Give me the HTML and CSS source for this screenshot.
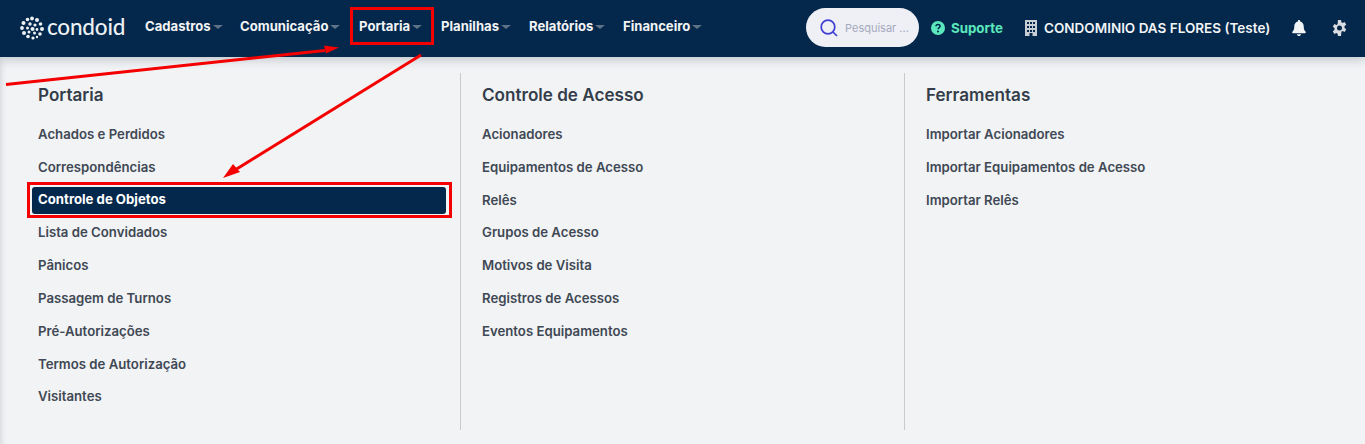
FILE: index.html
```html
<!DOCTYPE html>
<html lang="pt">
<head>
<meta charset="utf-8">
<title>Condoid</title>
<link rel="stylesheet" href="styles.css">
</head>
<body>
<header class="nav">
  <div class="logo">
    <svg class="logo-mark" width="24" height="24" viewBox="0 0 24 24" fill="#eef1f4">
      <circle cx="12" cy="2.500" r="1.900"/><circle cx="7.500" cy="3.500" r="1.800"/><circle cx="17" cy="4" r="2"/><circle cx="3.500" cy="7" r="2"/><circle cx="20.500" cy="8" r="1.800"/><circle cx="2" cy="12" r="1.900"/><circle cx="22" cy="13" r="2"/><circle cx="4" cy="17" r="2"/><circle cx="20" cy="18" r="1.800"/><circle cx="8" cy="20.500" r="1.800"/><circle cx="13" cy="22" r="1.600"/><circle cx="17" cy="21" r="1.200"/><circle cx="10" cy="8" r="1.700"/><circle cx="15" cy="9" r="1.600"/><circle cx="7.500" cy="12" r="1.500"/><circle cx="12.500" cy="13" r="2"/><circle cx="17" cy="13.500" r="1.400"/><circle cx="9" cy="16" r="1.500"/><circle cx="14.500" cy="17" r="1.500"/>
    </svg>
    <span class="logo-text">condoid</span>
  </div>
  <nav class="menu">
    <a class="menu-item cadastros">Cadastros<i class="caret"></i></a>
    <a class="menu-item comunicacao">Comunicação<i class="caret"></i></a>
    <a class="menu-item portaria">Portaria<i class="caret"></i></a>
    <a class="menu-item planilhas">Planilhas<i class="caret"></i></a>
    <a class="menu-item relatorios">Relatórios<i class="caret"></i></a>
    <a class="menu-item">Financeiro<i class="caret"></i></a>
  </nav>
  <div class="right">
    <div class="search">
      <svg width="20" height="20" viewBox="0 0 20 20" fill="none" stroke="#3f3fd1" stroke-width="1.700"><circle cx="9" cy="9" r="6.800"/><path d="M14 14l4 4"/></svg>
      <span>Pesquisar ...</span>
    </div>
    <a class="support">
      <svg width="14" height="14" viewBox="0 0 14 14"><circle cx="7" cy="7" r="7" fill="#5ce8bd"/><path d="M4.900 5.300C5 4.100 5.900 3.400 7 3.400c1.200 0 2.100.8 2.100 1.800 0 1.500-2 1.500-2 3" fill="none" stroke="#03284c" stroke-width="1.500"/><circle cx="7" cy="10.400" r="1" fill="#03284c"/></svg>
      <span>Suporte</span>
    </a>
    <div class="condo">
      <svg width="12" height="16" viewBox="0 0 12 16"><path fill-rule="evenodd" fill="#c9ced4" d="M0 0h12v16H7.500v-3h-3v3H0zM2 2v2h2V2zm3 0v2h2V2zm3 0v2h2V2zM2 6v2h2V6zm3 0v2h2V6zm3 0v2h2V6zM2 10v2h2v-2zm3 0v2h2v-2zm3 0v2h2v-2z"/></svg>
      <span>CONDOMINIO DAS FLORES (Teste)</span>
    </div>
    <svg class="bell" width="14" height="16" viewBox="0 0 14 16" fill="#f2f4f6"><path d="M7 0c.7 0 1.100.5 1.100 1.100v.5C10.300 2.100 11.700 4 11.700 6.200c0 3.300 1 4.600 2 5.600.4.500.2 1.400-.7 1.400H1c-.9 0-1.100-.9-.7-1.400 1-1 2-2.300 2-5.600 0-2.200 1.400-4.100 3.600-4.600v-.5C5.900.5 6.300 0 7 0zM5 14.200h4c0 1-.9 1.800-2 1.800s-2-.8-2-1.800z"/></svg>
    <svg class="gear" width="15" height="16" viewBox="0 0 15 16"><path fill="#d9dde1" fill-rule="evenodd" d="M6 0h3l.4 2.200 1.200.7 2.100-.8 1.500 2.600-1.700 1.400v1.800l1.700 1.400-1.500 2.600-2.100-.8-1.200.7L9 16H6l-.4-2.200-1.200-.7-2.100.8L.8 11.300l1.700-1.400V8.100L.8 6.700l1.500-2.600 2.100.8 1.200-.7zM7.500 5.500a2.500 2.500 0 1 0 0 5 2.500 2.500 0 0 0 0-5z"/></svg>
  </div>
</header>
<main class="panel">
  <section class="col">
    <h2>Portaria</h2>
    <ul>
      <li>Achados e Perdidos</li>
      <li>Correspondências</li>
      <li class="active">Controle de Objetos</li>
      <li>Lista de Convidados</li>
      <li>Pânicos</li>
      <li>Passagem de Turnos</li>
      <li>Pré-Autorizações</li>
      <li>Termos de Autorização</li>
      <li>Visitantes</li>
    </ul>
  </section>
  <section class="col">
    <h2>Controle de Acesso</h2>
    <ul>
      <li>Acionadores</li>
      <li>Equipamentos de Acesso</li>
      <li>Relês</li>
      <li>Grupos de Acesso</li>
      <li>Motivos de Visita</li>
      <li>Registros de Acessos</li>
      <li>Eventos Equipamentos</li>
    </ul>
  </section>
  <section class="col">
    <h2>Ferramentas</h2>
    <ul>
      <li>Importar Acionadores</li>
      <li>Importar Equipamentos de Acesso</li>
      <li>Importar Relês</li>
    </ul>
  </section>
</main>
<svg class="annotations" width="1365" height="444" viewBox="0 0 1365 444">
  <g fill="none" stroke="#f50000">
    <rect x="351.500" y="8.500" width="81" height="35" stroke-width="3"/>
    <rect x="28.500" y="183.500" width="422" height="33" stroke-width="3"/>
    <path d="M6 84.500L325 50.500" stroke-width="3"/>
    <path d="M421 55L235 170" stroke-width="3"/>
  </g>
  <path fill="#f50000" d="M339 47.500L324 45.500L326 53.500Z"/>
  <path fill="#f50000" d="M223 178L233 164L240 172Z"/>
</svg>
</body>
</html>
```
FILE: styles.css
```css
* { box-sizing: border-box; }
html, body { margin: 0; padding: 0; }
body {
  width: 1365px;
  height: 444px;
  overflow: hidden;
  position: relative;
  background: #f1f3f5;
  font-family: "Inter", "Open Sans", sans-serif;
}
.nav {
  height: 57px;
  background: #03284c;
  display: flex;
  align-items: center;
  padding: 0 18px 2px 20px;
  box-shadow: 0 2px 10px rgba(30, 40, 60, .25);
  position: relative;
}
.logo { display: flex; align-items: center; gap: 3px; width: 125px; flex: none; }
.logo-text {
  color: #eef1f4;
  font: 500 22.500px/1 "Lato", sans-serif;
  letter-spacing: -.2px;
}
.menu { display: flex; align-items: center; margin-bottom: 3px; }
.menu-item {
  color: #f2f4f6;
  font-size: 13.100px;
  font-weight: 700;
  display: flex;
  align-items: center;
  white-space: nowrap;
}
.cadastros { width: 95px; }
.comunicacao { width: 119px; }
.portaria { width: 82px; }
.planilhas { width: 88px; }
.relatorios { width: 94px; }
.caret {
  width: 0;
  height: 0;
  margin: 2px 0 0 2px;
  border: 4px solid transparent;
  border-top-color: #5f7388;
  border-bottom-width: 0;
  border-left-width: 5px;
  border-right-width: 5px;
}
.right { margin-left: auto; display: flex; align-items: center; }
.search {
  width: 113px;
  height: 39px;
  margin-right: 12px;
  border-radius: 20px;
  background: #eef0f6;
  display: flex;
  align-items: center;
  gap: 6px;
  padding-left: 13px;
  color: #a5a9bd;
  font: 400 11px "Inter", sans-serif;
  white-space: nowrap;
  overflow: hidden;
}
.support {
  display: flex;
  align-items: center;
  gap: 6px;
  color: #5ce8bd;
  font-size: 13.300px;
  font-weight: 700;
  width: 94px;
}
.condo {
  display: flex;
  align-items: center;
  gap: 7px;
  color: #f2f4f6;
  font-size: 13.500px;
  font-weight: 600;
  white-space: nowrap;
  width: 267px;
}
.bell { flex: none; margin-right: 26px; }
.gear { flex: none; }
.panel {
  display: flex;
  height: 387px;
  padding-top: 16px;
  box-shadow: inset 7px 0 7px -7px rgba(30, 40, 60, .2);
}
.col {
  height: 357px;
  padding-left: 21px;
  border-right: 1px solid #c6cbd0;
}
.col:nth-child(1) { width: 461px; padding-left: 38px; }
.col:nth-child(2) { width: 444px; }
.col:nth-child(3) { border-right: 0; }
h2 {
  margin: 0;
  padding-top: 11px;
  height: 45px;
  color: #343d4a;
  font-size: 17.100px;
  line-height: 22px;
  font-weight: 600;
}
ul { list-style: none; margin: 0; padding: 0; }
li {
  height: 32.800px;
  line-height: 32.800px;
  color: #3f4854;
  font-size: 13.200px;
  font-weight: 600;
  white-space: nowrap;
}
li.active {
  color: #fff;
  font-weight: 700;
  background: #03284c;
  border-radius: 3px;
  margin: 3.800px 14px 2px -6px;
  padding-left: 6px;
  height: 27px;
  line-height: 25px;
}
.annotations {
  position: absolute;
  left: 0;
  top: 0;
  pointer-events: none;
}
```
